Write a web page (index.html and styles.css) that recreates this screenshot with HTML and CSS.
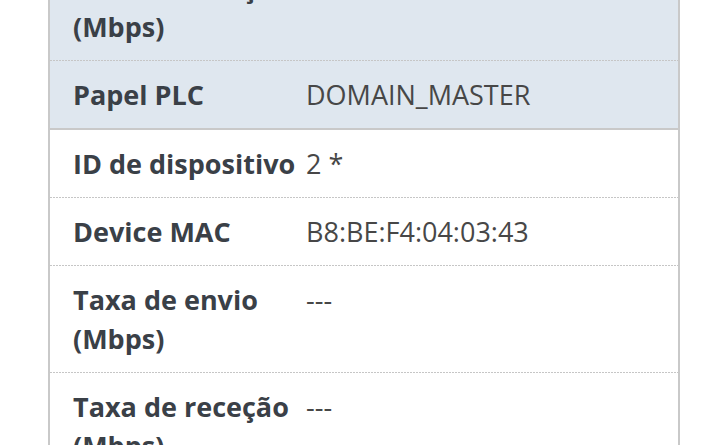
FILE: index.html
```html
<!DOCTYPE html>
<html lang="pt">
<head>
  <meta charset="utf-8" />
  <meta name="viewport" content="width=device-width, initial-scale=1" />
  <title>Estado PLC</title>
  <link rel="stylesheet" href="styles.css">
</head>
<body>
  <div id="plc-root">
    <div class="info-table">
      <div class="info-group group-highlight">
        <div class="info-row">
          <div class="info-label">Taxa de receção (Mbps)</div>
          <div class="info-value">---</div>
        </div>
        <div class="info-row">
          <div class="info-label">Papel PLC</div>
          <div class="info-value">DOMAIN_MASTER</div>
        </div>
      </div>
      <div class="info-group">
        <div class="info-row">
          <div class="info-label">ID de dispositivo</div>
          <div class="info-value">2 *</div>
        </div>
        <div class="info-row">
          <div class="info-label">Device MAC</div>
          <div class="info-value">B8:BE:F4:04:03:43</div>
        </div>
        <div class="info-row">
          <div class="info-label">Taxa de envio (Mbps)</div>
          <div class="info-value">---</div>
        </div>
        <div class="info-row">
          <div class="info-label">Taxa de receção (Mbps)</div>
          <div class="info-value">---</div>
        </div>
      </div>
    </div>
  </div>
</body>
</html>
```

FILE: styles.css
```css
* {
  margin: 0;
  padding: 0;
  box-sizing: border-box;
}

body {
  background-color: #fff;
  font-family: "Open Sans", Arial, sans-serif;
  overflow: hidden;
}

#plc-root {
  padding: 0 48px;
  height: 445px;
  overflow: hidden;
}

/* page is scrolled, first row is cut at the top */
.info-table {
  margin-top: -46px;
  border-left: 2px solid #c9c9c9;
  border-right: 2px solid #c9c9c9;
}

.info-group {
  background-color: #fff;
}

.info-group.group-highlight {
  background-color: #dfe7ef;
  border-bottom: 2px solid #c9c9c9;
}

.info-row {
  display: grid;
  grid-template-columns: 233px 1fr;
  padding: 15px 23px 14px;
  font-size: 27px;
  line-height: 39px;
  /* dotted separator, 2px dot every 3px */
  background-image: linear-gradient(to right, #c6c6c6 2px, transparent 2px);
  background-size: 3px 1px;
  background-repeat: repeat-x;
  background-position: 0 0;
}

.info-group .info-row:first-child {
  background-image: none;
  padding-top: 14px;
}

.info-label {
  font-weight: 700;
  color: #3a4047;
  padding-right: 6px;
}

.info-value {
  color: #474747;
}
```
